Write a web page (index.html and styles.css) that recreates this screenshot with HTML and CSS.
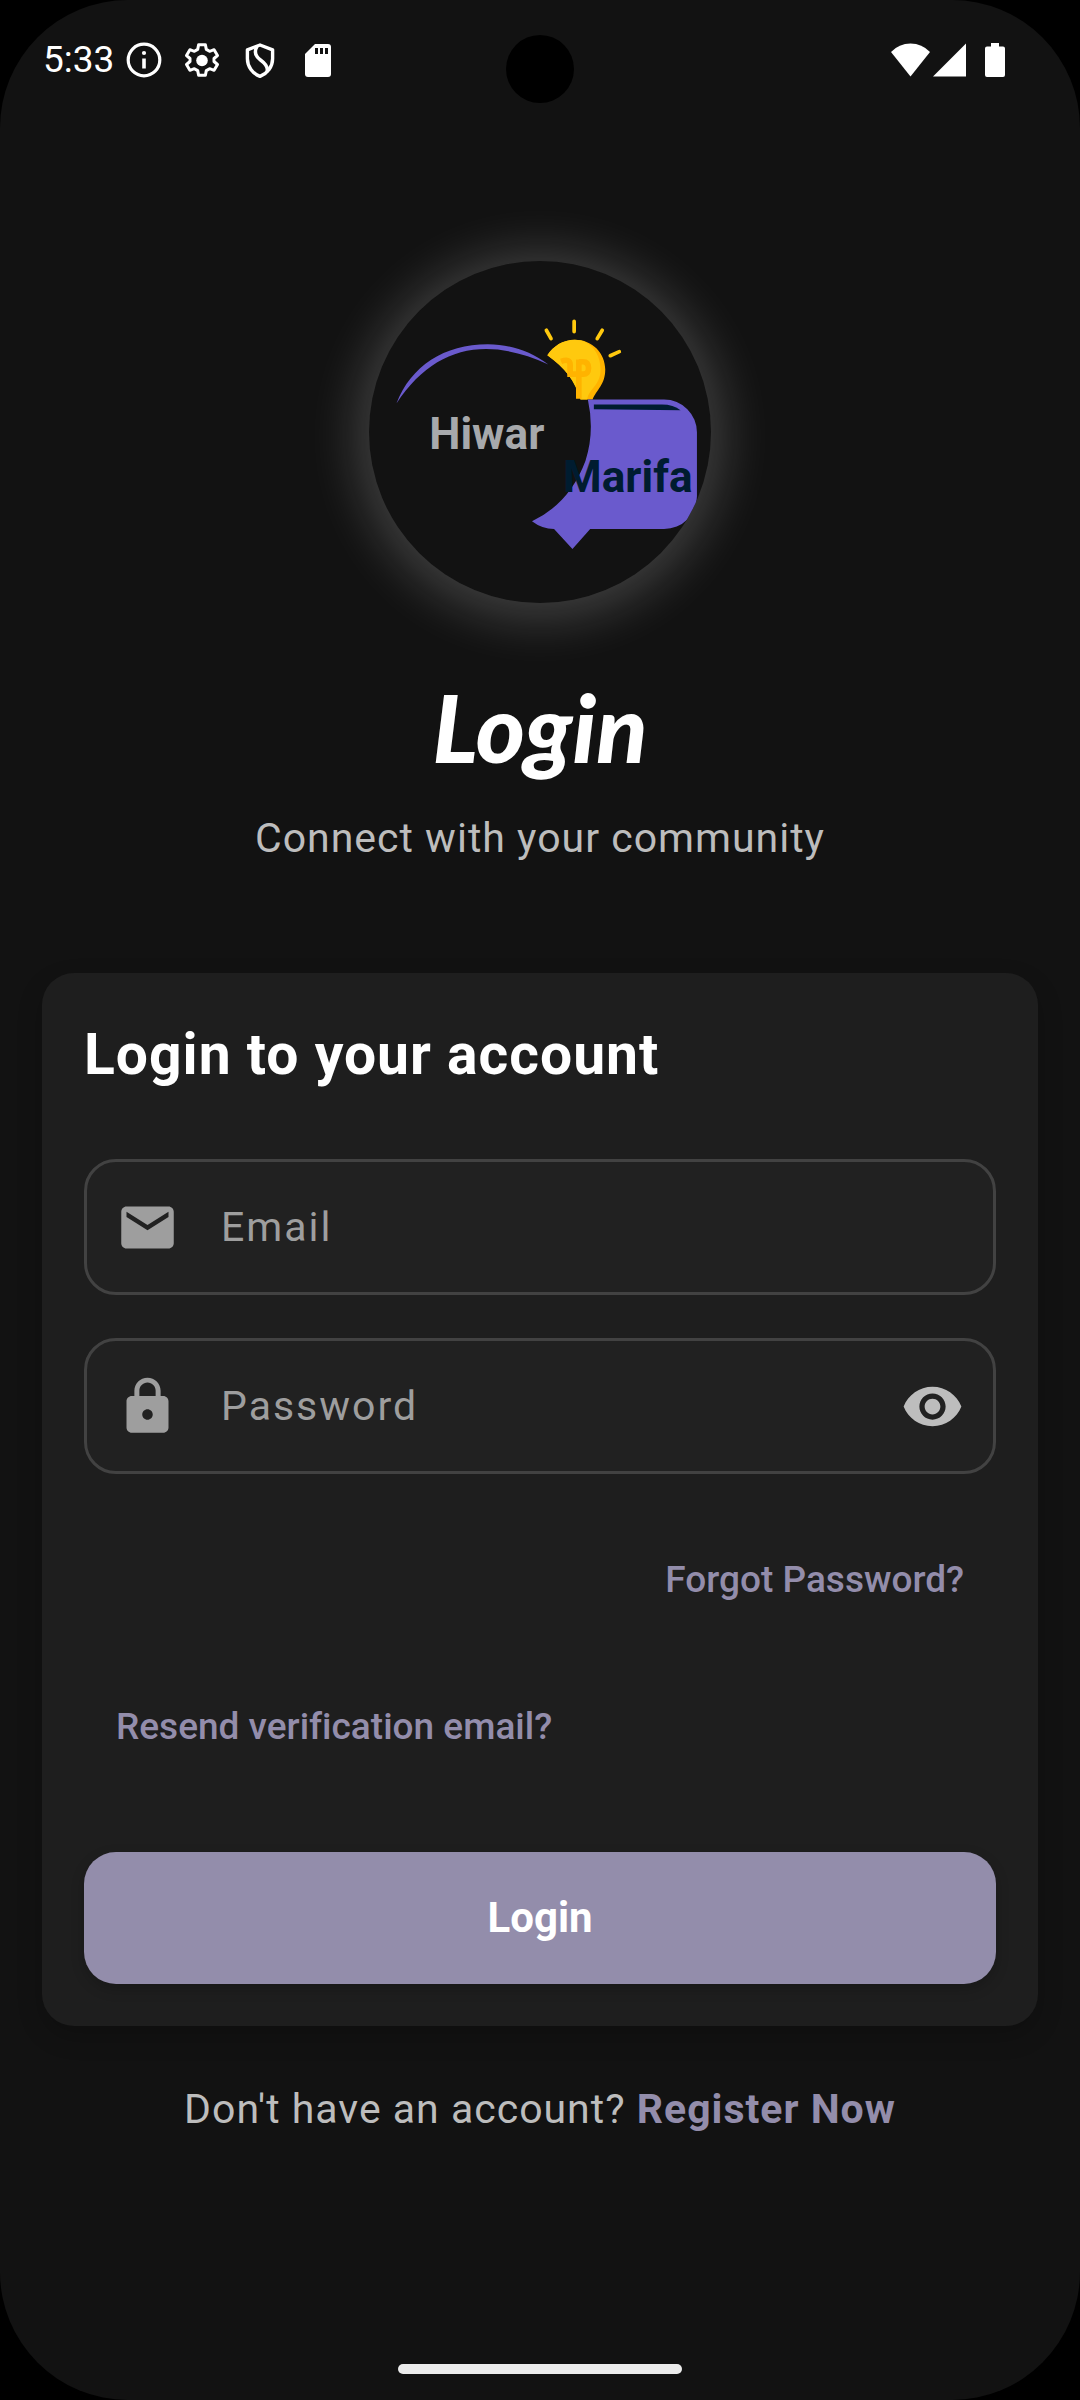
FILE: index.html
```html
<!DOCTYPE html>
<html lang="en">
<head>
<meta charset="utf-8">
<meta name="viewport" content="width=device-width, initial-scale=1">
<title>Login</title>
<link rel="stylesheet" href="styles.css">
</head>
<body>
<div class="screen">
  <div class="camera"></div>
  <header class="status">
    <span class="time">5:33</span>
    <div class="status-icons">
      <svg class="icon-s" viewBox="0 0 40 40" fill="none" stroke="#fff"><circle cx="20" cy="20" r="15.8" stroke-width="3.2"/><path d="M20 18.500v10" stroke-width="3.600"/><circle cx="20" cy="13" r="2.100" fill="#fff" stroke="none"/></svg>
      <svg class="icon-s" viewBox="0 0 40 40" fill="none" stroke="#fff" stroke-width="3" stroke-linejoin="round"><path d="M16.600 4.800h6.800l.9 4.600 3.300 1.900 4.500-1.600 3.400 5.800-3.500 3v3l3.500 3-3.400 5.800-4.500-1.600-3.300 1.900-.9 4.600h-6.800l-.9-4.600-3.300-1.900-4.500 1.600-3.400-5.800 3.500-3v-3l-3.500-3 3.400-5.800 4.500 1.600 3.300-1.900z"/><circle cx="20" cy="20.500" r="5.800" fill="#fff" stroke="none"/></svg>
      <svg class="icon-s" viewBox="0 0 40 40" fill="none" stroke="#fff" stroke-width="3.400" stroke-linejoin="round"><path d="M20 5l-12.600 4.800v9c0 8 5.200 14.600 12.600 17.600 7.400-3 12.600-9.600 12.600-17.600v-9z"/><path d="M17 6.500c-3.400 6-1.500 10 3.500 13.500 5 3.600 8 7 6.500 12"/></svg>
      <svg class="icon-s" viewBox="0 0 40 40"><path fill="#fff" d="M17 4h13a3 3 0 0 1 3 3v27a3 3 0 0 1-3 3H10a3 3 0 0 1-3-3V14z"/><path fill="#121212" d="M17 8h3v6h-3zM22 8h3v6h-3zM27 8h3v6h-3z"/></svg>
    </div>
    <div class="signals">
      <svg class="wifi" viewBox="0 0 40 40" fill="#fff"><path d="M21.500 36.500L2 12Q10 3.500 21.500 3.500T41 12z"/></svg>
      <svg class="wifi" viewBox="0 0 40 40" fill="#fff"><path d="M37 3.500v33H4z"/></svg>
      <svg class="battery" viewBox="0 0 20 40" fill="#fff"><path d="M6 3h8v3.500h4a2 2 0 0 1 2 2V35a2 2 0 0 1-2 2H2a2 2 0 0 1-2-2V8.500a2 2 0 0 1 2-2h4z"/></svg>
    </div>
  </header>

  <main class="content">
    <svg class="logo" viewBox="90 96 1022 1022" role="img" aria-label="Hiwar Marifa">
      <path fill="#6a5acd" d="M172 522C215 410 315 345 445 345C515 346 570 365 626 405C440 320 285 350 172 522z"/>
      <g stroke="#ffc90e" stroke-width="11" stroke-linecap="round"><path d="M620 303l14 25M703 276v31M787 303l-15 25M811 379l27-12"/></g>
      <path fill="#ffb300" d="M623 378C640 350 670 331 705 331C758 331 796 372 796 420C796 465 770 480 758 510H722C706 455 675 415 623 378z"/>
      <path fill="#ffc90e" d="M623 378C640 350 670 331 705 331C750 331 782 370 782 420C782 468 748 475 742 510H722C706 455 675 415 623 378z"/>
      <path fill="none" stroke="#ffb300" stroke-width="17" d="M664 396q27-10 27 10v28h26M717 390v118M717 397h12q17 0 17 19t-17 18h-12"/>
      <path fill="#6a5acd" d="M744 510H972A98 98 0 0 1 1070 608V799A98 98 0 0 1 972 897H751L698 957L643 897Q607 897 577 874Q690 820 737 693Q765 605 744 510z"/>
      <path fill="#001c30" d="M762 525H965Q1000 525 1021 542L762 539z"/>
      <text class="logo-text" x="270" y="657" fill="#a7a9ac">Hiwar</text>
      <text class="logo-text" x="670" y="787" fill="#001c30">Marifa</text>
    </svg>
    <h1 class="title">Login</h1>
    <p class="subtitle">Connect with your community</p>

    <form class="card">
      <h2 class="heading">Login to your account</h2>
      <label class="field">
        <svg class="icon" viewBox="0 0 24 24" fill="#9e9e9e"><path d="M20 4H4c-1.100 0-1.990.9-1.990 2L2 18c0 1.100.9 2 2 2h16c1.100 0 2-.9 2-2V6c0-1.100-.9-2-2-2zm0 4l-8 5-8-5V6l8 5 8-5v2z"/></svg>
        <input class="input" type="email" placeholder="Email" aria-label="Email">
      </label>
      <div class="field">
        <label class="icon" for="password"><svg class="icon" viewBox="0 0 24 24" fill="#9e9e9e" role="img" aria-label="Password"><path d="M18 8h-1V6c0-2.760-2.240-5-5-5S7 3.240 7 6v2H6c-1.100 0-2 .9-2 2v10c0 1.100.9 2 2 2h12c1.100 0 2-.9 2-2V10c0-1.100-.9-2-2-2zm-6 9c-1.100 0-2-.9-2-2s.9-2 2-2 2 .9 2 2-.9 2-2 2zm3.100-9H8.900V6c0-1.710 1.390-3.100 3.100-3.100 1.710 0 3.100 1.390 3.100 3.100v2z"/></svg></label>
        <input class="input" id="password" type="password" placeholder="Password">
        <button class="toggle" type="button" aria-label="Show password"><svg class="icon" viewBox="0 0 24 24" fill="#bdbdbd"><path d="M12 4.500C7 4.500 2.730 7.610 1 12c1.730 4.390 6 7.500 11 7.500s9.270-3.110 11-7.500c-1.730-4.390-6-7.500-11-7.500zM12 17c-2.760 0-5-2.240-5-5s2.240-5 5-5 5 2.240 5 5-2.240 5-5 5zm0-8c-1.660 0-3 1.340-3 3s1.340 3 3 3 3-1.340 3-3-1.340-3-3-3z"/></svg></button>
      </div>
      <div class="links">
        <a class="link link-end" href="#forgot">Forgot Password?</a>
        <a class="link" href="#resend">Resend verification email?</a>
      </div>
      <button class="submit" type="submit">Login</button>
    </form>
    <p class="register">Don't have an account? <a href="#register">Register Now</a></p>
  </main>
  <div class="home-bar"></div>
</div>
</body>
</html>
```

FILE: styles.css
```css
* {
  box-sizing: border-box;
}

body {
  margin: 0;
  background: #000;
  color: #fff;
  font-family: Roboto, "Liberation Sans", sans-serif;
  font-size: 41px;
  line-height: 56px;
}

h1, h2, p {
  margin: 0;
}

a {
  color: #938dab;
  text-decoration: none;
}

svg {
  display: block;
}

.screen {
  position: relative;
  display: flex;
  flex-direction: column;
  min-height: 100vh;
  border-radius: 128px;
  background: #121212;
}

.camera {
  position: absolute;
  top: 35px;
  left: 50%;
  width: 68px;
  height: 68px;
  margin-left: -34px;
  border-radius: 50%;
  background: #000;
}

.status {
  display: flex;
  align-items: center;
  height: 120px;
  padding: 0 75px 0 43px;
}

.time {
  width: 81px;
  font-size: 37px;
}

.status-icons {
  display: flex;
  flex: 1;
  gap: 18px;
}

.icon-s {
  width: 40px;
  height: 40px;
}

.signals {
  display: flex;
}

.wifi {
  width: 40px;
  height: 40px;
  overflow: visible;
}

.battery {
  width: 20px;
  height: 40px;
  margin-left: 16px;
}

.content {
  display: flex;
  flex: 1;
  flex-direction: column;
  align-items: center;
  padding: 141px 42px 0;
}

.logo {
  width: 342px;
  height: 342px;
  border-radius: 50%;
  background: #121212;
  box-shadow: 0 4px 52px 12px rgba(255, 255, 255, 0.2);
}

.logo-text {
  font: 700 132px Roboto, sans-serif;
}

.title {
  margin-top: 64px;
  font: italic 900 94px/120px Lato, sans-serif;
}

.subtitle {
  margin-top: 23px;
  color: #bdbdbd;
  letter-spacing: 1px;
}

.card {
  display: flex;
  flex-direction: column;
  width: 100%;
  margin-top: 107px;
  padding: 42px;
  border-radius: 32px;
  background: #1e1e1e;
  box-shadow: 0 10px 26px rgba(0, 0, 0, 0.2);
}

.heading {
  margin-bottom: 64px;
  font-size: 57px;
  line-height: 80px;
  letter-spacing: 1px;
}

.field {
  display: flex;
  align-items: center;
  height: 136px;
  margin-bottom: 43px;
  padding: 0 29px;
  border: 3px solid #424242;
  border-radius: 32px;
  background: #212121;
}

.icon {
  flex: none;
  width: 63px;
  height: 63px;
}

.input {
  flex: 1;
  min-width: 0;
  height: 100%;
  margin-left: 42px;
  padding: 0;
  border: 0;
  outline: 0;
  background: none;
  color: #fff;
  font: inherit;
  letter-spacing: 2px;
}

.input::placeholder {
  color: #9e9e9e;
  opacity: 1;
}

.toggle {
  padding: 0;
  border: 0;
  background: none;
}

.links {
  display: flex;
  flex-direction: column;
  align-items: flex-start;
  gap: 21px;
  margin-bottom: 62px;
}

.link {
  padding: 35px 32px;
  font-size: 37px;
  font-weight: 500;
  font-variant-ligatures: none;
}

.link-end {
  align-self: flex-end;
}

.submit {
  height: 132px;
  padding: 0;
  border: 0;
  border-radius: 32px;
  background: #938dab;
  box-shadow: 0 5px 14px rgba(0, 0, 0, 0.2);
  color: #fff;
  font: inherit;
  font-size: 42px;
  font-weight: 700;
}

.register {
  margin-top: 55px;
  color: #bdbdbd;
  letter-spacing: 1px;
}

.register a {
  font-weight: 700;
}

.home-bar {
  width: 284px;
  height: 10px;
  margin: 24px auto 26px;
  border-radius: 5px;
  background: #ececec;
}
```
